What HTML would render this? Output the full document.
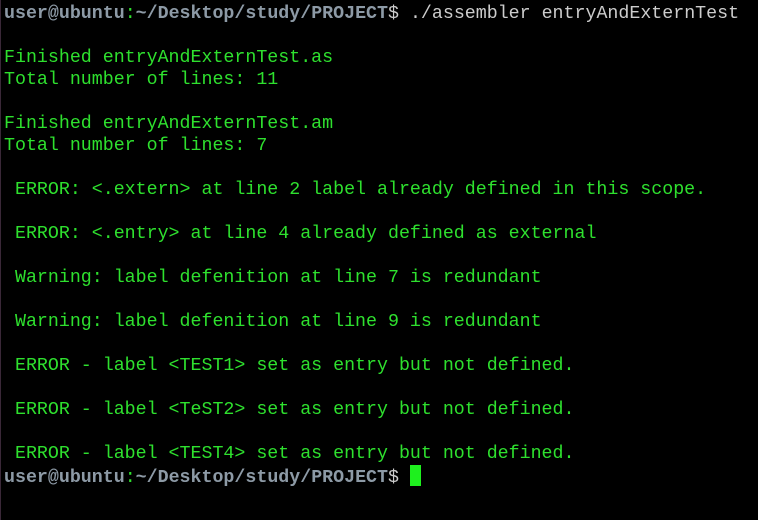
<!DOCTYPE html>
<html><head><style>
html,body{margin:0;padding:0;background:#000;width:758px;height:520px;overflow:hidden}
body{border-left:1px solid #3a2838;box-sizing:border-box}
pre{margin:0;padding:3px 0 0 3px;font-family:"Liberation Mono","DejaVu Sans Mono",monospace;font-size:18.3px;line-height:22px;color:#2ee02e}
.u{color:#8d9aa6;font-weight:bold}
.c{color:#2ee02e}
.cur{display:inline-block;width:11px;height:21px;background:#1ef01e;vertical-align:-4px}
</style></head><body><pre><span class="u">user@ubuntu</span><span class="c">:</span><span class="u">~/Desktop/study/PROJECT</span><span style="color:#ccc">$ ./assembler entryAndExternTest</span>

Finished entryAndExternTest.as
Total number of lines: 11

Finished entryAndExternTest.am
Total number of lines: 7

 ERROR: &lt;.extern&gt; at line 2 label already defined in this scope.

 ERROR: &lt;.entry&gt; at line 4 already defined as external

 Warning: label defenition at line 7 is redundant

 Warning: label defenition at line 9 is redundant

 ERROR - label &lt;TEST1&gt; set as entry but not defined.

 ERROR - label &lt;TeST2&gt; set as entry but not defined.

 ERROR - label &lt;TEST4&gt; set as entry but not defined.
<span class="u">user@ubuntu</span><span class="c">:</span><span class="u">~/Desktop/study/PROJECT</span><span style="color:#ccc">$ </span><span class="cur"></span></pre></body></html>
